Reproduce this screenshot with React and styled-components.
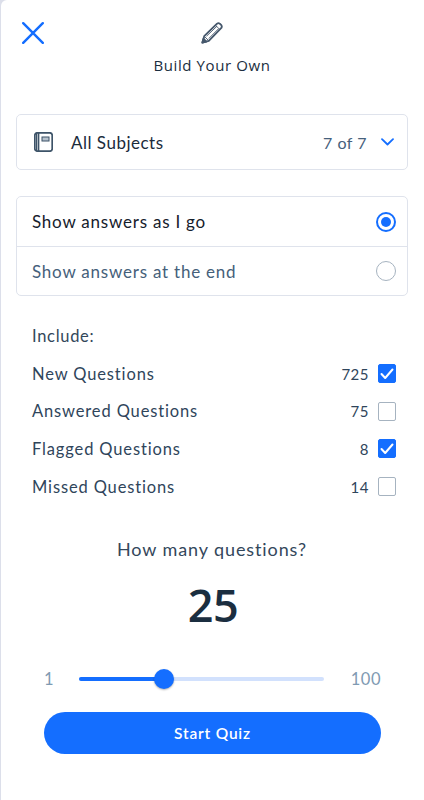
import React from "react";
import styled, { createGlobalStyle } from "styled-components";

const Global = createGlobalStyle`
  html, body { margin: 0; padding: 0; background: #dcdfea; }
  * { box-sizing: border-box; }
  body { font-family: "Lato", "Open Sans", sans-serif; }
`;

const Page = styled.div`
  margin-left: 1px;
  width: 423px;
  height: 800px;
  background: #fff;
  border-top-left-radius: 6px;
  padding: 0 16px 0 15px;
  overflow: hidden;
`;
const Header = styled.header`
  position: relative;
  height: 114px;
  display: flex;
  flex-direction: column;
  align-items: center;
  padding-top: 22px;
`;
const Close = styled.button`
  position: absolute;
  left: 6px;
  top: 22px;
  width: 22px;
  height: 22px;
  padding: 0;
  border: 0;
  background: none;
  color: #146eff;
  display: block;
`;
const Title = styled.h1`
  margin: 11px 0 0;
  font: 400 15px/20px "Open Sans", sans-serif;
  letter-spacing: 0.6px;
  color: #1b2e40;
`;
const Card = styled.div`
  border: 1px solid #dfe3ec;
  border-radius: 5px;
  background: #fff;
`;
const SubjectCard = styled(Card)`
  height: 56px;
  display: flex;
  align-items: center;
  padding: 0 13px 0 17px;
`;
const SubjectName = styled.span`
  margin-left: 18px;
  flex: 1;
  font-size: 17px;
  letter-spacing: 0.5px;
  color: #1b2b3b;
`;
const SubjectCount = styled.span`
  font-size: 16px;
  letter-spacing: 0.5px;
  color: #46617c;
  margin-right: 14px;
`;
const OptionCard = styled(Card)`
  margin-top: 26px;
  height: 100px;
`;
const Option = styled.div`
  height: 49px;
  display: flex;
  align-items: center;
  justify-content: space-between;
  padding: 0 11px 0 15px;
  font-size: 17px;
  letter-spacing: 0.78px;
  color: ${(p) => (p.$active ? "#15202c" : "#45607a")};
  & + & { border-top: 1px solid #dfe3ec; }
`;
const Radio = styled.span`
  width: 20px;
  height: 20px;
  border-radius: 50%;
  border: ${(p) => (p.$on ? "2.5px solid #146eff" : "1.5px solid #a6b3c0")};
  display: flex;
  align-items: center;
  justify-content: center;
  &::after {
    content: "";
    display: ${(p) => (p.$on ? "block" : "none")};
    width: 10px;
    height: 10px;
    border-radius: 50%;
    background: #146eff;
  }
`;
const Include = styled.section`
  margin-top: 25px;
  padding: 0 12px 0 16px;
`;
const IncludeLabel = styled.div`
  font-size: 16.5px;
  line-height: 30px;
  letter-spacing: 0.7px;
  color: #33475b;
  margin-bottom: 4px;
`;
const Row = styled.div`
  height: 37.6px;
  display: flex;
  align-items: center;
`;
const RowLabel = styled.span`
  flex: 1;
  font-size: 16.5px;
  letter-spacing: 0.86px;
  color: #2f455b;
`;
const RowCount = styled.span`
  font-size: 15px;
  letter-spacing: 0.5px;
  color: #2f455b;
  margin-right: 9px;
`;
const Check = styled.span`
  width: 18px;
  height: 19px;
  border-radius: 2px;
  border: 1.5px solid ${(p) => (p.$on ? "#146eff" : "#a6b3c0")};
  background: ${(p) => (p.$on ? "#146eff" : "#fff")};
  display: flex;
  align-items: center;
  justify-content: center;
`;
const Question = styled.div`
  margin-top: 32px;
  text-align: center;
  font-size: 18px;
  line-height: 24px;
  letter-spacing: 0.9px;
  color: #33475b;
`;
const Count = styled.div`
  margin-top: 17px;
  text-align: center;
  text-indent: 2px;
  font: 600 45px/54px "Open Sans", sans-serif;
  letter-spacing: -0.5px;
  color: #1b2e40;
`;
const SliderRow = styled.div`
  margin-top: 37px;
  padding: 0 27px 0 28px;
  display: flex;
  align-items: center;
  justify-content: space-between;
`;
const Bound = styled.span`
  font-size: 16.5px;
  letter-spacing: 0.5px;
  color: #7f9ab2;
`;
const Track = styled.div`
  position: relative;
  width: 245px;
  height: 4px;
  margin-right: 2px;
  border-radius: 2px;
  background: #d2e1fd;
`;
const Fill = styled.div`
  height: 4px;
  border-radius: 2px;
  background: #146eff;
`;
const Thumb = styled.div`
  position: absolute;
  top: -8px;
  width: 20px;
  height: 20px;
  margin-left: -10px;
  border-radius: 50%;
  background: #146eff;
  box-shadow: 0 1px 2px rgba(0, 0, 0, 0.3);
`;
const Start = styled.button`
  display: block;
  margin: 23px 0 0 28px;
  width: 337px;
  height: 42px;
  border: 0;
  border-radius: 21px;
  background: #146eff;
  color: #fff;
  font: 600 15.5px "Lato", sans-serif;
  letter-spacing: 0.8px;
`;

const rows = [
  ["New Questions", 725, true],
  ["Answered Questions", 75, false],
  ["Flagged Questions", 8, true],
  ["Missed Questions", 14, false],
];

export default function App() {
  return (
    <>
      <Global />
      <Page>
        <Header>
          <Close aria-label="Close">
            <svg width="22" height="22" viewBox="0 0 22 22" fill="none" stroke="currentColor" strokeWidth="2.4" strokeLinecap="round">
              <path d="M1.2 1.2 L20.8 20.8 M20.8 1.2 L1.2 20.8" />
            </svg>
          </Close>
          <svg width="22" height="22" viewBox="0 0 24 24" fill="none" stroke="#46586c" strokeWidth="2" strokeLinejoin="round">
            <path d="M1.5 22.5 L3.5 15.5 L17.5 1.8 Q19 0.8 20.5 1.8 L22.2 3.5 Q23.2 5 22.2 6.5 L8.5 20.5 Z" />
            <path d="M3.5 15.5 L8.5 20.5 M15.8 3.5 L20.5 8.2 M6 15.5 L17.5 4.5 M8.5 18 L19 7.5" strokeWidth="1" />
            <path d="M1.5 22.5 L2.7 18.2 L5.8 21.3 Z" fill="#46586c" />
          </svg>
          <Title>Build Your Own</Title>
        </Header>
        <SubjectCard>
          <svg width="19" height="20" viewBox="0 0 19 20" fill="none" stroke="#3d5368" strokeWidth="1.7">
            <rect x="0.8" y="0.8" width="17.4" height="18.4" rx="2.5" />
            <path d="M4.5 1 V19" strokeWidth="1.7" />
            <path d="M2.5 1 V19" strokeWidth="1.2" />
            <rect x="8" y="5" width="7" height="4" fill="#b7c2cd" strokeWidth="1" />
          </svg>
          <SubjectName>All Subjects</SubjectName>
          <SubjectCount>7 of 7</SubjectCount>
          <svg width="13" height="8" viewBox="0 0 13 8" fill="none" stroke="#146eff" strokeWidth="1.8" strokeLinecap="round" strokeLinejoin="round">
            <path d="M1 1.2 L6.5 6.5 L12 1.2" />
          </svg>
        </SubjectCard>
        <OptionCard>
          <Option $active>
            Show answers as I go
            <Radio $on />
          </Option>
          <Option>
            Show answers at the end
            <Radio />
          </Option>
        </OptionCard>
        <Include>
          <IncludeLabel>Include:</IncludeLabel>
          {rows.map(([label, n, on]) => (
            <Row key={label}>
              <RowLabel>{label}</RowLabel>
              <RowCount>{n}</RowCount>
              <Check $on={on}>
                {on && (
                  <svg width="14" height="12" viewBox="0 0 14 12" fill="none" stroke="#fff" strokeWidth="2" strokeLinecap="round" strokeLinejoin="round">
                    <path d="M1.5 6 L5.2 10 L12.5 1.5" />
                  </svg>
                )}
              </Check>
            </Row>
          ))}
        </Include>
        <Question>How many questions?</Question>
        <Count>25</Count>
        <SliderRow>
          <Bound>1</Bound>
          <Track>
            <Fill style={{ width: "34.7%" }} />
            <Thumb style={{ left: "34.7%" }} />
          </Track>
          <Bound>100</Bound>
        </SliderRow>
        <Start>Start Quiz</Start>
      </Page>
    </>
  );
}
